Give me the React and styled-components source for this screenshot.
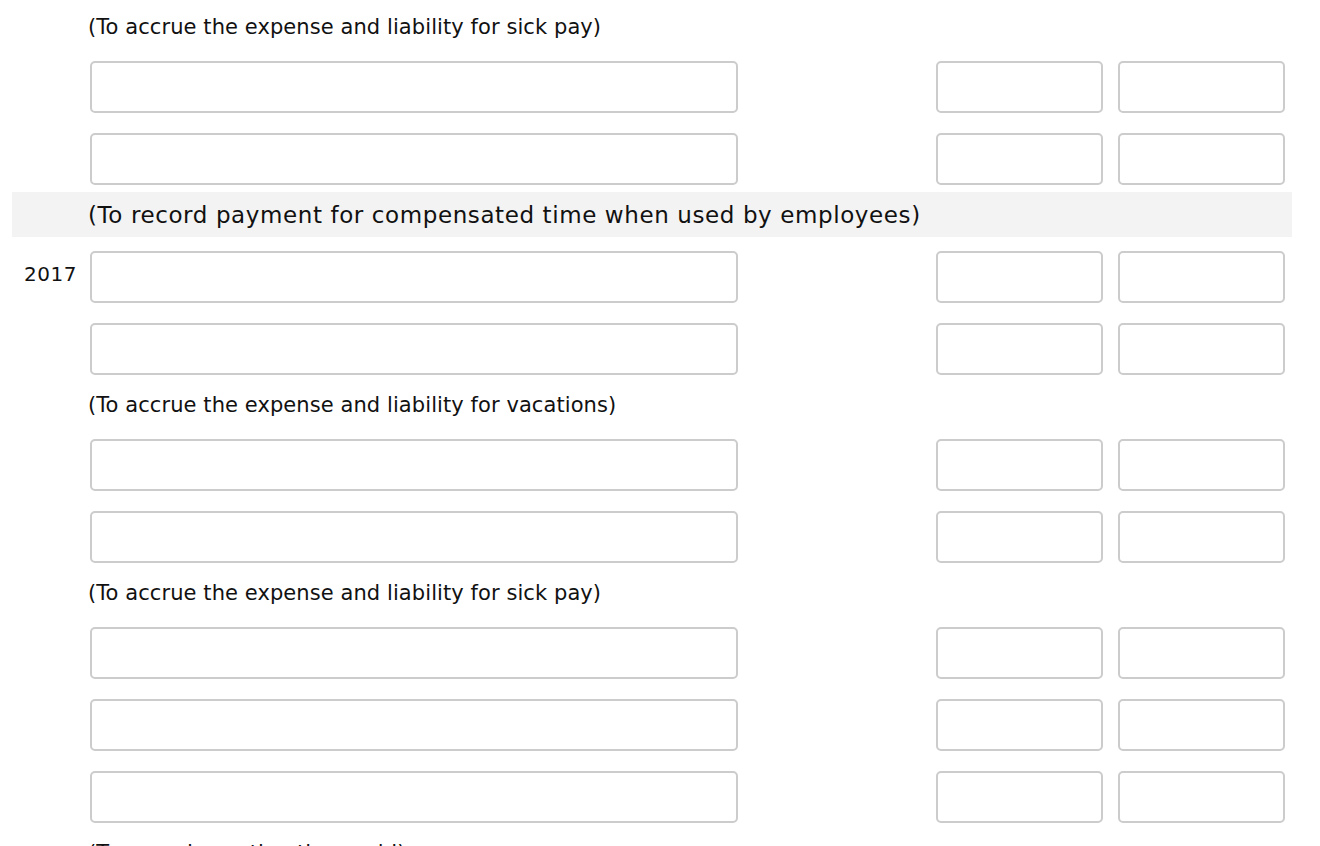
import styled, { createGlobalStyle } from 'styled-components'

const GlobalStyle = createGlobalStyle`
    html, body {
        margin: 0;
        padding: 0;
        background: #fff;
    }
    body {
        font-family: "DejaVu Sans", Verdana, sans-serif;
        color: #111;
        overflow: hidden;
    }
`

const Sheet = styled.div`
    width: 1280px;
    margin-left: 12px;
    padding-top: 4px;
    display: flex;
    flex-direction: column;
`

const Note = styled.div`
    height: 45px;
    display: flex;
    align-items: center;
    padding-left: 76px;
    margin-top: ${(p) => (p.$first ? '0' : '7px')};
    margin-bottom: ${(p) => (p.$shaded ? '14px' : '12px')};
    background: ${(p) => (p.$shaded ? '#f3f3f3' : 'transparent')};
    font-size: ${(p) => (p.$wide ? '23px' : '21px')};
    letter-spacing: ${(p) => (p.$wide ? '0.6px' : '0.08px')};
    white-space: nowrap;
`

const Entry = styled.div`
    display: flex;
    align-items: center;
    height: 52px;
    padding-right: 7px;
    & + & {
        margin-top: 20px;
    }
`

const DateCell = styled.div`
    width: 66px;
    padding-left: 12px;
    margin-bottom: 6px;
    font-size: 20px;
    letter-spacing: 0.5px;
`

const Field = styled.input`
    box-sizing: border-box;
    width: ${(p) => p.$w}px;
    height: 52px;
    border: 2px solid #cccccc;
    border-radius: 5px;
    background: #fff;
    padding: 0 10px;
    font-size: 18px;
    outline: none;
`

const Spacer = styled.div`
    flex: 1;
`

const Amounts = styled.div`
    display: flex;
    gap: 15px;
`

function JournalRow({ date }) {
    return (
        <Entry>
            <DateCell>{date}</DateCell>
            <Field $w={648} type="text" />
            <Spacer />
            <Amounts>
                <Field $w={167} type="text" />
                <Field $w={167} type="text" />
            </Amounts>
        </Entry>
    )
}

function App() {
    return (
        <>
            <GlobalStyle />
            <Sheet>
                <Note $first>(To accrue the expense and liability for sick pay)</Note>
                <div>
                    <JournalRow />
                    <JournalRow />
                </div>
                <Note $shaded $wide>(To record payment for compensated time when used by employees)</Note>
                <div>
                    <JournalRow date="2017" />
                    <JournalRow />
                </div>
                <Note>(To accrue the expense and liability for vacations)</Note>
                <div>
                    <JournalRow />
                    <JournalRow />
                </div>
                <Note>(To accrue the expense and liability for sick pay)</Note>
                <div>
                    <JournalRow />
                    <JournalRow />
                    <JournalRow />
                </div>
                <Note>(To record vacation time paid)</Note>
            </Sheet>
        </>
    )
}

export default App
